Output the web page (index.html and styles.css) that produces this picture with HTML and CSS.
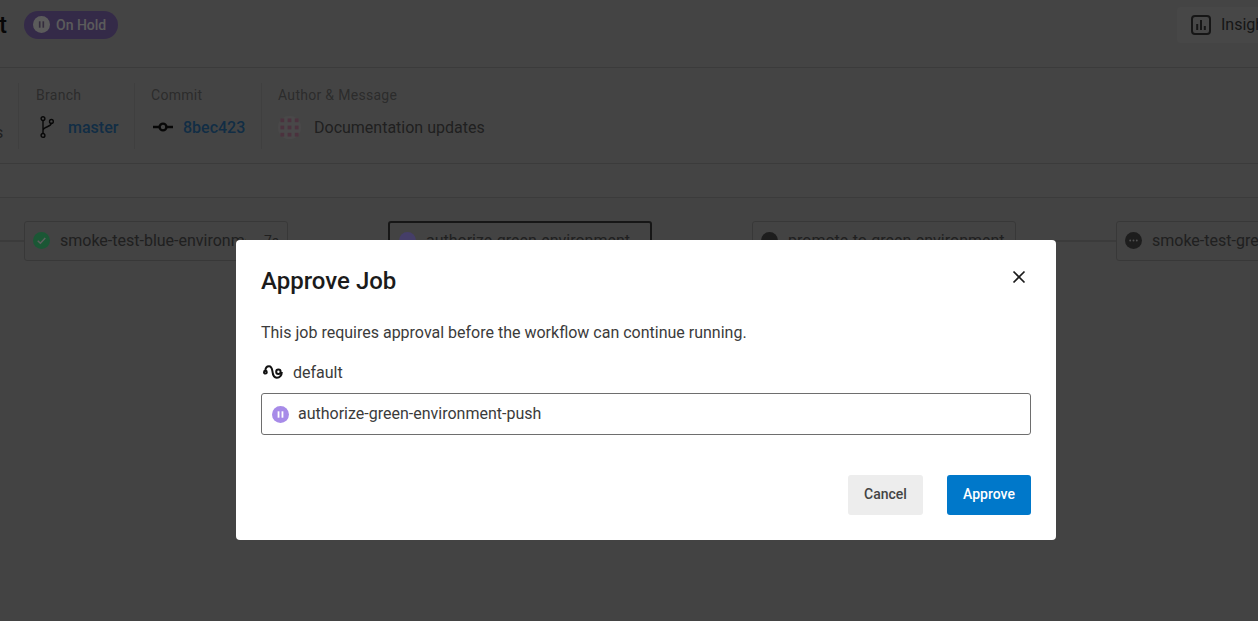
FILE: index.html
```html
<!DOCTYPE html>
<html>

<head lang="en">
    <meta charset="UTF-8">
    <meta name="viewport" content="width=device-width, initial-scale=1.0">
    <title>Approve Job</title>
    <link rel="stylesheet" href="styles.css">
</head>

<body>
    <div class="page">
        <header class="top">
            <h1 class="title">t</h1>
            <span class="badge">
                <svg class="badge-icon" viewBox="0 0 18 18"><circle cx="9" cy="9" r="9" fill="#d4d4d4"/><rect x="6.200" y="5.600" width="1.800" height="6.800" fill="#7a6a8e"/><rect x="10" y="5.600" width="1.800" height="6.800" fill="#7a6a8e"/></svg>
                On Hold
            </span>
            <a class="insights" href="#">
                <svg class="insights-icon" viewBox="0 0 20 20"><rect x="1" y="1" width="18" height="18" rx="3" fill="none" stroke="#333" stroke-width="2"/><rect x="5.200" y="9" width="2" height="6" fill="#333"/><rect x="9" y="5" width="2" height="10" fill="#333"/><rect x="12.800" y="11" width="2" height="4" fill="#333"/></svg>
                <span>Insights</span>
            </a>
        </header>

        <section class="meta">
            <div class="meta-col meta-first"><span class="meta-value">s</span></div>
            <div class="meta-col meta-branch">
                <span class="meta-label">Branch</span>
                <div class="meta-row">
                    <svg class="branch-icon" viewBox="0 0 14 22" fill="none" stroke="#111" stroke-width="1.400"><circle cx="3" cy="2.600" r="1.900"/><circle cx="3" cy="19.400" r="1.900"/><circle cx="11.400" cy="5.400" r="1.900"/><path d="M3 4.500V17.500M3 14.500C3 10.500 11.400 11 11.400 7.300"/></svg>
                    <a class="meta-link" href="#">master</a>
                </div>
            </div>
            <div class="meta-col meta-commit">
                <span class="meta-label">Commit</span>
                <div class="meta-row">
                    <svg class="commit-icon" viewBox="0 0 20 12" fill="none" stroke="#111" stroke-width="2.400"><circle cx="10" cy="6" r="3.400"/><path d="M0 6H6.400M13.600 6H20"/></svg>
                    <a class="meta-link" href="#">8bec423</a>
                </div>
            </div>
            <div class="meta-col meta-author">
                <span class="meta-label">Author &amp; Message</span>
                <div class="meta-row">
                    <svg class="avatar" viewBox="0 0 24 24"><circle cx="12" cy="12" r="12" fill="#aaa8a9"/><g fill="#ad7590"><rect x="2.500" y="2.500" width="4" height="4"/><rect x="10" y="2.500" width="4" height="4"/><rect x="17.500" y="2.500" width="4" height="4"/><rect x="2.500" y="10" width="4" height="4"/><rect x="10" y="10" width="4" height="4"/><rect x="17.500" y="10" width="4" height="4"/><rect x="2.500" y="17.500" width="4" height="4"/><rect x="10" y="17.500" width="4" height="4"/><rect x="17.500" y="17.500" width="4" height="4"/></g></svg>
                    <span class="meta-value">Documentation updates</span>
                </div>
            </div>
        </section>

        <div class="tabs"></div>

        <section class="graph">
            <div class="graph-line"></div>
            <div class="job">
                <svg class="job-icon" viewBox="0 0 18 18"><circle cx="9" cy="9" r="9" fill="#3fc97c"/><path d="M5 9.300L7.800 12L13 6.300" fill="none" stroke="#ddd" stroke-width="1.500"/></svg>
                <span class="job-name">smoke-test-blue-environment</span>
                <span class="job-time">7s</span>
            </div>
            <div class="job job-active">
                <svg class="job-icon" viewBox="0 0 18 18"><circle cx="9" cy="9" r="9" fill="#a090f0"/></svg>
                <span class="job-name">authorize-green-environment-push</span>
            </div>
            <div class="job">
                <svg class="job-icon" viewBox="0 0 18 18"><circle cx="9" cy="9" r="9" fill="#444"/></svg>
                <span class="job-name">promote-to-green-environment</span>
            </div>
            <div class="job">
                <svg class="job-icon" viewBox="0 0 18 18"><circle cx="9" cy="9" r="9" fill="#444"/><g fill="#bbb"><circle cx="5.500" cy="9" r="1"/><circle cx="9" cy="9" r="1"/><circle cx="12.500" cy="9" r="1"/></g></svg>
                <span class="job-name">smoke-test-green-environment</span>
            </div>
        </section>
    </div>

    <div class="overlay">
        <div class="modal">
            <div class="modal-head">
                <h2 class="modal-title">Approve Job</h2>
                <button class="close" type="button">
                    <svg viewBox="0 0 14 14" fill="none" stroke="#1b1b1b" stroke-width="1.700"><path d="M1.500 1.500L12.500 12.500M12.500 1.500L1.500 12.500"/></svg>
                </button>
            </div>
            <p class="modal-text">This job requires approval before the workflow can continue running.</p>
            <div class="context">
                <svg class="context-icon" viewBox="0 0 20 14" fill="none" stroke="#111" stroke-width="2"><circle cx="2.400" cy="7.200" r="1.400"/><path d="M2.400 5.800C2.400 3 4 1.200 6 1.200C8.200 1.200 9 3.400 9.400 6.200C9.800 10 11 12.800 13.800 12.800C16.800 12.800 18.800 10 18.800 7"/><circle cx="15.400" cy="6.800" r="2.200"/></svg>
                <span>default</span>
            </div>
            <div class="job-box">
                <svg class="pause-icon" viewBox="0 0 16 16"><circle cx="8" cy="8" r="8" fill="#a78be8"/><rect x="5.300" y="5" width="1.700" height="6" fill="#fff"/><rect x="9" y="5" width="1.700" height="6" fill="#fff"/></svg>
                <span>authorize-green-environment-push</span>
            </div>
            <div class="actions">
                <button class="btn btn-cancel" type="button">Cancel</button>
                <button class="btn btn-approve" type="button">Approve</button>
            </div>
        </div>
    </div>
</body>

</html>
```

FILE: styles.css
```css
* {
    margin: 0;
    padding: 0;
    box-sizing: border-box;
}

html,
body {
    height: 100%;
    overflow: hidden;
}

body {
    font-family: Roboto, "Liberation Sans", sans-serif;
    background-color: #9b9b9b;
    color: #111;
}

a {
    text-decoration: none;
}

.page {
    height: 100%;
    overflow: hidden;
}

.top {
    height: 68px;
    display: flex;
    align-items: center;
    border-bottom: 1px solid #8a8a8a;
    padding-bottom: 18px;
    background-color: #9f9f9f;
}

.title {
    font-size: 24px;
    font-weight: 500;
    margin-left: -1px;
    width: 25px;
    color: #111;
    line-height: 28px;
}

.badge {
    display: flex;
    align-items: center;
    width: 94px;
    height: 28px;
    padding-left: 9px;
    border-radius: 14px;
    background-color: #7a62a8;
    color: #d4d4d4;
    font-size: 14px;
    font-weight: 500;
}

.badge-icon {
    width: 17px;
    height: 17px;
    margin-right: 6px;
}

.insights {
    display: flex;
    align-items: center;
    margin-left: auto;
    margin-right: -61px;
    width: 142px;
    height: 36px;
    padding-left: 14px;
    background-color: #a5a5a5;
    border-radius: 4px;
    color: #333;
    font-size: 16px;
}

.insights-icon {
    width: 20px;
    height: 20px;
    margin-right: 10px;
}

.meta {
    height: 96px;
    display: flex;
    padding-top: 15px;
    border-bottom: 1px solid #8a8a8a;
    background-color: #9f9f9f;
}

.meta-col {
    height: 66px;
    padding-left: 17px;
    border-left: 1px solid #939393;
}

.meta-first {
    width: 18px;
    margin-left: -1px;
    padding: 37px 0 0;
    border-left: 0;
    display: flex;
}

.meta-first .meta-value {
    margin-left: -4px;
}

.meta-branch {
    width: 116px;
    margin-left: 1px;
}

.meta-commit {
    width: 127px;
    padding-left: 16px;
}

.meta-author {
    padding-left: 16px;
}

.meta-label {
    display: block;
    font-size: 14px;
    line-height: 16px;
    margin-top: 4px;
    letter-spacing: 0.3px;
    color: #666;
}

.meta-row {
    display: flex;
    align-items: center;
    height: 24px;
    margin-top: 12px;
}

.meta-value {
    font-size: 16px;
    line-height: 24px;
    padding-top: 1px;
    color: #4a4a4a;
}

.meta-link {
    font-size: 16px;
    font-weight: 500;
    color: #2a6aa0;
}

.branch-icon {
    width: 14px;
    height: 22px;
    margin-left: 4px;
    margin-right: 14px;
}

.commit-icon {
    width: 20px;
    height: 12px;
    margin-left: 2px;
    margin-right: 10px;
}

.avatar {
    width: 23px;
    height: 23px;
    margin-right: 13px;
}

.tabs {
    height: 34px;
    border-bottom: 1px solid #8a8a8a;
    background-color: #9f9f9f;
}

.graph {
    position: relative;
    display: flex;
    gap: 100px;
    padding: 23px 0 0 24px;
}

.graph-line {
    position: absolute;
    left: 0;
    right: 0;
    top: 42px;
    height: 2px;
    background-color: #8a8a8a;
}

.job {
    position: relative;
    flex: none;
    display: flex;
    align-items: center;
    width: 264px;
    height: 40px;
    padding: 0 8px 1px;
    background-color: #9b9b9b;
    border: 1px solid #828282;
    border-radius: 3px;
    font-size: 16px;
    color: #4a4a4a;
}

.job-active {
    padding: 0 20px 1px 9px;
    border: 2px solid #333;
}

.job-icon {
    flex: none;
    width: 17px;
    height: 17px;
    margin-right: 10px;
}

.job-name {
    flex: 1;
    overflow: hidden;
    white-space: nowrap;
}

.job-time {
    margin-left: 18px;
    font-size: 14px;
}

.overlay {
    position: fixed;
    left: 0;
    top: 0;
    right: 0;
    bottom: 0;
    padding: 240px 0 0 236px;
    background-color: rgba(0, 0, 0, 0.57);
}

.modal {
    width: 820px;
    height: 300px;
    padding: 0 25px;
    background-color: #fff;
    border-radius: 4px;
    color: #3b3b3b;
}

.modal-head {
    display: flex;
    align-items: center;
    justify-content: space-between;
    padding-top: 22px;
    height: 59px;
}

.modal-title {
    font-size: 24px;
    font-weight: 500;
    line-height: 30px;
    color: #1b1b1b;
}

.close {
    width: 14px;
    height: 14px;
    margin-right: 5px;
    margin-bottom: 7px;
    background: none;
    border: 0;
}

.close svg {
    display: block;
}

.modal-text {
    margin-top: 23px;
    font-size: 16px;
    line-height: 22px;
}

.context {
    display: flex;
    align-items: center;
    margin-top: 18px;
    height: 22px;
    padding-bottom: 2px;
    font-size: 16px;
}

.context-icon {
    width: 20px;
    height: 14px;
    margin-left: 2px;
    margin-right: 10px;
}

.job-box {
    display: flex;
    align-items: center;
    height: 42px;
    margin-top: 9px;
    padding-left: 10px;
    padding-bottom: 2px;
    border: 1px solid #6e6e6e;
    border-radius: 3px;
    font-size: 16px;
}

.pause-icon {
    width: 17px;
    height: 17px;
    margin-top: 2px;
    margin-right: 9px;
}

.actions {
    display: flex;
    justify-content: flex-end;
    gap: 24px;
    margin-top: 40px;
}

.btn {
    height: 40px;
    padding-bottom: 2px;
    border: 0;
    border-radius: 3px;
    font-family: inherit;
    font-size: 14px;
    font-weight: 500;
}

.btn-cancel {
    width: 75px;
    background-color: #ededed;
    color: #444;
}

.btn-approve {
    width: 84px;
    background-color: #0078ca;
    color: #fff;
}
```
